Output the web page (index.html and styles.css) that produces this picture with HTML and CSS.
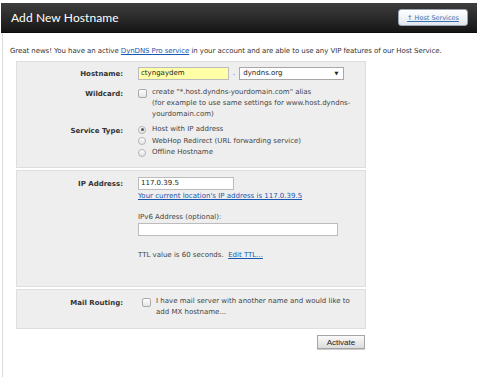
FILE: index.html
```html
<!DOCTYPE html>
<html>
<head>
<meta charset="utf-8">
<link rel="stylesheet" href="styles.css">
</head>
<body>
<div class="page">
  <div class="header">
    <h1 class="title">Add New Hostname</h1>
    <a class="hs-btn" href="#"><span>↑ Host Services</span></a>
  </div>
  <div class="content">
    <p class="intro">Great news! You have an active <a href="#">DynDNS Pro service</a> in your account and are able to use any VIP features of our Host Service.</p>
    <div class="form">
      <div class="panel p1">
        <div class="row r-host">
          <div class="label">Hostname:</div>
          <div class="field hostfield">
            <span class="input yellow w90">ctyngaydem</span>
            <span class="dot">.</span>
            <span class="select">dyndns.org<span class="arrow">▼</span></span>
          </div>
        </div>
        <div class="row r-wild">
          <div class="label">Wildcard:</div>
          <div class="field check">
            <span class="cb"></span>
            <span class="ctext">create "*.host.dyndns-yourdomain.com" alias<br>(for example to use same settings for www.host.dyndns-<br>yourdomain.com)</span>
          </div>
        </div>
        <div class="row r-svc">
          <div class="label">Service Type:</div>
          <div class="field radios">
            <div class="ropt"><span class="rb on"></span>Host with IP address</div>
            <div class="ropt"><span class="rb"></span>WebHop Redirect (URL forwarding service)</div>
            <div class="ropt"><span class="rb"></span>Offline Hostname</div>
          </div>
        </div>
      </div>
      <div class="panel p2">
        <div class="row">
          <div class="label">IP Address:</div>
          <div class="field ipfield">
            <span class="input w95">117.0.39.5</span>
            <a class="iplink" href="#">Your current location's IP address is 117.0.39.5</a>
            <div class="v6label">IPv6 Address (optional):</div>
            <span class="input w199"></span>
            <div class="ttl">TTL value is 60 seconds. &nbsp;<a href="#">Edit TTL...</a></div>
          </div>
        </div>
      </div>
      <div class="panel p3">
        <div class="row">
          <div class="label">Mail Routing:</div>
          <div class="field check">
            <span class="cb"></span>
            <span class="ctext">I have mail server with another name and would like to<br>add MX hostname...</span>
          </div>
        </div>
      </div>
      <div class="actions"><span class="btn">Activate</span></div>
    </div>
  </div>
</div>
</body>
</html>
```

FILE: styles.css
```css
html, body { margin: 0; padding: 0; background: #fff; }
body { font-family: "DejaVu Sans", Verdana, sans-serif; font-size: 7px; color: #333; }
.page { padding-top: 3px; width: 477px; height: 377px; }
.header {
  margin-left: 1px; width: 476px; height: 30px; box-sizing: border-box;
  background: linear-gradient(#3e3e3e, #161616);
  border-bottom: 1px solid #0d0d0d;
  display: flex; align-items: center; justify-content: space-between;
  padding: 0 9px 0 10px;
}
.title { margin: 0; font-family: Lato, "Open Sans", sans-serif; font-weight: normal; font-size: 12px; color: #fff; letter-spacing: 0.1px; }
.hs-btn {
  display: flex; align-items: center; justify-content: center;
  width: 70px; height: 17px; box-sizing: border-box;
  background: linear-gradient(#ffffff, #e3e8ee);
  border: 1px solid #9aa4b0; border-radius: 3px;
  color: #3a70b0; font-size: 6.5px; text-decoration: underline;
}
.content { margin-left: 2px; border-left: 1px solid #dcdcdc; height: 344px; }
.intro { margin: 0; padding: 13px 0 0 7px; line-height: 10px; white-space: nowrap; letter-spacing: -0.07px; }
.intro a { color: #1a57b0; }
.form { margin: 5px 0 0 13px; width: 350px; }
.panel { background: #eeeeee; border: 1px solid #dedede; box-sizing: border-box; }
.p1 { height: 107px; padding-top: 5px; }
.p2 { height: 117px; margin-top: 2px; padding-top: 6px; }
.p3 { height: 40px; margin-top: 2px; padding-top: 6px; }
.row { display: grid; grid-template-columns: 106px 1fr; column-gap: 15px; align-items: start; }
.label { text-align: right; font-weight: bold; color: #333; line-height: 11px; padding-top: 2px; }
.field { line-height: 11px; }
.hostfield { display: flex; align-items: center; gap: 4px; }
.input { display: block; height: 13px; box-sizing: border-box; border: 1px solid #bcbcbc; background: #fff; padding: 0 2px; line-height: 11px; font-size: 7px; color: #222; }
.yellow { background: #ffffa8; }
.w90 { width: 91px; }
.w95 { width: 96px; }
.w199 { width: 200px; }
.dot { color: #555; }
.select { display: flex; justify-content: space-between; align-items: center; width: 105px; height: 13px; box-sizing: border-box; border: 1px solid #a8a8a8; background: #fff; padding: 0 5px 0 3px; color: #222; }
.arrow { font-size: 5px; }
.r-wild { margin-top: 7px; }
.check { display: flex; align-items: flex-start; gap: 5px; }
.cb { flex: none; width: 7px; height: 7px; margin-top: 2px; border: 1px solid #aaa; border-radius: 2px; background: linear-gradient(#fff, #e4e4e4); }
.ctext { color: #444; }
.r-svc { margin-top: 4px; }
.radios .ropt { display: flex; align-items: center; gap: 6px; height: 11.5px; color: #444; }
.rb { border-radius: 50%; border: 1px solid #b4b4b4; background: linear-gradient(#fff, #e2e2e2); box-sizing: border-box; width: 8px; height: 8px; display: flex; align-items: center; justify-content: center; }
.rb.on::after { content: ""; width: 3px; height: 3px; border-radius: 50%; background: #555; }
.ipfield { display: flex; flex-direction: column; align-items: flex-start; }
.iplink { color: #1a57b0; margin-top: 1px; }
.v6label { margin-top: 10px; color: #444; }
.ttl { margin-top: 14px; color: #444; }
.ttl a { color: #1a57b0; }
.p3 .cb { margin-left: 4px; }
.actions { display: flex; justify-content: flex-end; margin-top: 6px; padding-right: 1px; }
.btn { display: flex; align-items: center; justify-content: center; width: 48px; height: 14px; box-sizing: border-box; border: 1px solid #a5a5a5; background: linear-gradient(#fafafa, #dcdcdc); font-family: "Liberation Sans", Arial, sans-serif; font-size: 8px; color: #222; box-shadow: 0 1px 0 #ccc; }
```
